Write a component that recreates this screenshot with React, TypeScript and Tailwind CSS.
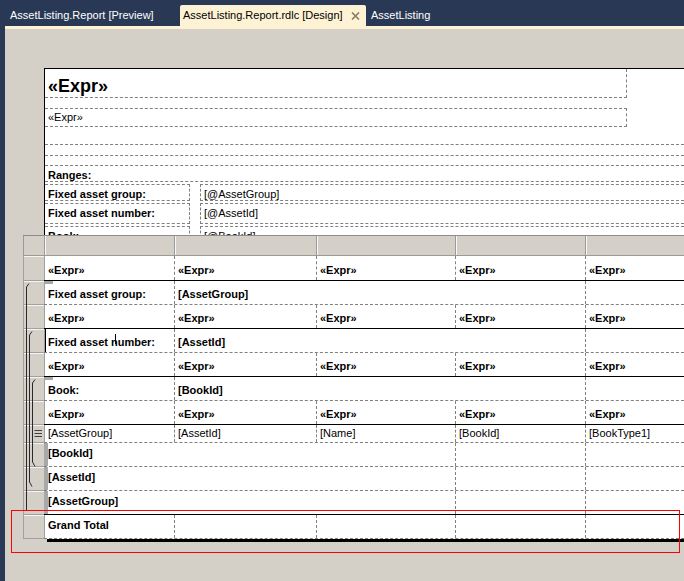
import React from "react";

const dash = "border-dashed border-[#808080]";
const gray = "bg-[#d4d0c8]";
const down = "pt-[4px]";
const up = "pb-[3px]";

type CellProps = {
  w: string;
  bold?: boolean;
  first?: boolean;
  pad?: string;
  className?: string;
  children?: React.ReactNode;
};

const Cell: React.FC<CellProps> = ({ w, bold, first, pad = "pl-[3px]", className = "", children }) => (
  <div
    className={`flex shrink-0 items-center overflow-hidden whitespace-nowrap border-l ${pad} ${
      first ? "border-[#a0a0a0]" : dash
    } ${bold ? "font-bold" : ""} ${w} ${className}`}
  >
    {children}
  </div>
);

type RowProps = {
  h: string;
  solid?: boolean;
  children: React.ReactNode;
};

const Row: React.FC<RowProps> = ({ h, solid, children }) => (
  <div className={`flex ${h}`}>
    <div className={`w-[21px] shrink-0 border-b border-l border-[#a0a0a0] ${gray} shadow-[inset_0_1px_0_#f4f4f4]`} />
    <div className={`flex min-w-0 flex-1 border-b bg-white ${solid ? "border-black" : dash}`}>{children}</div>
  </div>
);

const ExprRow: React.FC<{ h: string }> = ({ h }) => (
  <Row h={h} solid>
    <Cell w="w-[130px]" first bold className={down}>«Expr»</Cell>
    <Cell w="w-[142px]" bold className={down}>«Expr»</Cell>
    <Cell w="w-[139px]" bold className={down}>«Expr»</Cell>
    <Cell w="w-[130px]" bold className={down}>«Expr»</Cell>
    <Cell w="flex-1" bold className={down}>«Expr»</Cell>
  </Row>
);

const GroupRow: React.FC<{ label: string; value: string; selected?: boolean; notch?: boolean }> = ({
  label,
  value,
  selected,
  notch,
}) => (
  <Row h="h-[24px]">
    <Cell w="w-[130px]" first bold className={`relative ${down}`}>
      {notch && <div className="absolute left-0 top-0 h-[3px] w-[8px] bg-[#a8a8a8]" />}
      {label}
      {selected && (
        <>
          <div className="pointer-events-none absolute -bottom-[3px] -right-px -top-px left-0 border border-black" />
          <div className="absolute left-[70px] top-[5px] h-[10px] w-px bg-black" />
        </>
      )}
    </Cell>
    <Cell w="w-[411px]" bold className={down}>{value}</Cell>
    <Cell w="flex-1" />
  </Row>
);

const FooterRow: React.FC<{ value: string; solid?: boolean }> = ({ value, solid }) => (
  <Row h="h-[24px]" solid={solid}>
    <Cell w="w-[411px]" first bold pad="pl-0" className={`border-l-4 border-l-[#a8a8a8] ${up}`}>
      {value}
    </Cell>
    <Cell w="w-[130px]" />
    <Cell w="flex-1" />
  </Row>
);

const ParamRow: React.FC<{ h: string; label: string; value: string }> = ({ h, label, value }) => (
  <div className={`flex ${h}`}>
    <div className={`w-[145px] shrink-0 overflow-hidden whitespace-nowrap border-y border-r ${dash} pl-[3px] pt-[3px] font-bold`}>
      {label}
    </div>
    <div className="w-[10px] shrink-0" />
    <div className={`flex-1 overflow-hidden whitespace-nowrap border-y border-l ${dash} pl-[3px] pt-[3px]`}>{value}</div>
  </div>
);

const HeaderCell: React.FC<{ w: string }> = ({ w }) => (
  <div className={`${w} shrink-0 border-b border-l border-[#9a9a9a] shadow-[inset_1px_0_0_#f8f8f8]`} />
);

export default function App() {
  return (
    <div className="relative flex h-[581px] w-[684px] flex-col overflow-hidden bg-[#293955] font-['Liberation_Sans',Arial,sans-serif] text-[11px] leading-[13px] text-black">
      {/* document tabs */}
      <div className="flex h-[26px] shrink-0 items-end">
        <div className="flex h-[21px] w-[180px] shrink-0 items-center pl-[10px] text-white">AssetListing.Report [Preview]</div>
        <div className="flex h-[21px] w-[186px] shrink-0 items-center rounded-t-[2px] bg-[#fdf3d4] pl-[3px] pr-[6px]">
          <span>AssetListing.Report.rdlc [Design]</span>
          <svg className="ml-auto" width="9" height="8" viewBox="0 0 9 8">
            <path d="M1 0.5 L8 7.5 M8 0.5 L1 7.5" stroke="#8b7d5c" strokeWidth="1.6" />
          </svg>
        </div>
        <div className="flex h-[21px] items-center pl-[5px] text-white">AssetListing</div>
      </div>
      <div className="ml-[5px] h-[3px] shrink-0 bg-[#fdf3d4]" />

      {/* design surface */}
      <div className={`ml-[5px] min-h-0 flex-1 overflow-hidden ${gray} pl-[18px] pt-[39px]`}>
        <div className="ml-[21px] h-[167px] overflow-hidden border-l border-t border-black bg-white">
          <div className={`h-[29px] w-[582px] border-b border-r ${dash} pl-[3px] pt-[8px] text-[18px] font-bold leading-[18px]`}>
            «Expr»
          </div>
          <div className="h-[10px]" />
          <div className={`flex h-[19px] w-[582px] items-center border-y border-r ${dash} pl-[3px]`}>«Expr»</div>
          <div className="h-[17px]" />
          <div className={`h-[11px] border-t ${dash}`} />
          <div className={`h-[10px] border-t ${dash}`} />
          <div className={`h-[17px] overflow-hidden border-y ${dash} pl-[3px] pt-[3px] font-bold`}>Ranges:</div>
          <div className="h-[2px]" />
          <ParamRow h="h-[17px]" label="Fixed asset group:" value="[@AssetGroup]" />
          <div className="h-[2px]" />
          <ParamRow h="h-[21px]" label="Fixed asset number:" value="[@AssetId]" />
          <div className="h-[2px]" />
          <ParamRow h="h-[21px]" label="Book:" value="[@BookId]" />
        </div>

        {/* tablix */}
        <div className="relative">
          <div className={`flex h-[21px] border-t border-[#8c8c8c] ${gray}`}>
            <div className="w-[21px] shrink-0 border-b border-l border-[#9a9a9a]" />
            <HeaderCell w="w-[130px]" />
            <HeaderCell w="w-[142px]" />
            <HeaderCell w="w-[139px]" />
            <HeaderCell w="w-[130px]" />
            <HeaderCell w="flex-1" />
          </div>
          <ExprRow h="h-[25px]" />
          <GroupRow label="Fixed asset group:" value="[AssetGroup]" notch />
          <ExprRow h="h-[24px]" />
          <GroupRow label="Fixed asset number:" value="[AssetId]" selected />
          <ExprRow h="h-[24px]" />
          <GroupRow label="Book:" value="[BookId]" notch />
          <ExprRow h="h-[24px]" />
          <Row h="h-[18px]">
            <Cell w="w-[130px]" first>[AssetGroup]</Cell>
            <Cell w="w-[142px]">[AssetId]</Cell>
            <Cell w="w-[139px]">[Name]</Cell>
            <Cell w="w-[130px]">[BookId]</Cell>
            <Cell w="flex-1">[BookType1]</Cell>
          </Row>
          <FooterRow value="[BookId]" />
          <FooterRow value="[AssetId]" />
          <FooterRow value="[AssetGroup]" solid />
          <Row h="h-[24px]">
            <Cell w="w-[130px]" first bold className={up}>Grand Total</Cell>
            <Cell w="w-[142px]" />
            <Cell w="w-[139px]" />
            <Cell w="w-[130px]" />
            <Cell w="flex-1" />
          </Row>
          <div className="ml-[24px] h-[3px] bg-black" />

          {/* group brackets and detail marker */}
          <svg className="pointer-events-none absolute left-0 top-0" width="21" height="310" viewBox="0 0 21 310">
            <g stroke="#2a2a2a" strokeWidth="1" fill="none">
              <path d="M6 48.5 L3.5 52 V275" />
              <path d="M9 96.5 L6.5 100 V247 L9 251.5" />
              <path d="M12 144.5 L9.5 148 V227 L12 231.5" />
            </g>
            <g stroke="#404040" strokeWidth="1">
              <path d="M11.5 195.5 H19 M11.5 198.5 H19 M11.5 201.5 H19" />
            </g>
          </svg>
        </div>
      </div>

      {/* selection rectangle */}
      <div className="pointer-events-none absolute left-[11px] top-[510px] h-[43px] w-[669px] border border-[#ff0000]" />
    </div>
  );
}
